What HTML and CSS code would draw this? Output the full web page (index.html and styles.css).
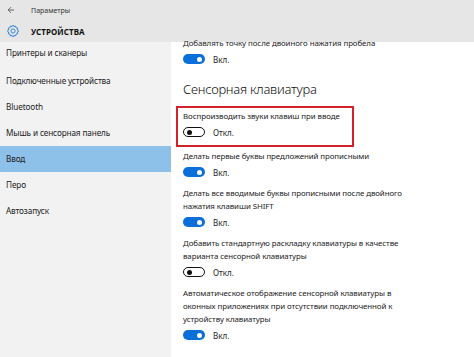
FILE: index.html
```html
<!DOCTYPE html>
<html lang="ru">
<head>
<meta charset="utf-8">
<title>Параметры</title>
<link rel="stylesheet" href="styles.css">
</head>
<body>
<div class="window">
  <header class="top">
    <div class="titlebar">
      <svg class="back" width="8" height="8" viewBox="0 0 8 8"><path d="M7 4H1.2M4 1.2L1.2 4L4 6.8" fill="none" stroke="#555" stroke-width="0.9"/></svg>
      <span class="title">Параметры</span>
    </div>
    <div class="section">
      <svg class="gear" width="14" height="14" viewBox="0 0 24 24"><path d="M12 1.8l1.6 2.6 3-.8.6 3 3 .7-.8 3 2.5 1.7-2.5 1.7.8 3-3 .7-.6 3-3-.8L12 22.2l-1.6-2.6-3 .8-.6-3-3-.7.8-3L2.1 12l2.5-1.7-.8-3 3-.7.6-3 3 .8z" fill="none" stroke="#2b7fd4" stroke-width="1.6" stroke-linejoin="round"/><circle cx="12" cy="12" r="3.6" fill="none" stroke="#2b7fd4" stroke-width="1.6"/></svg>
      <span class="section-name">УСТРОЙСТВА</span>
    </div>
  </header>
  <div class="main">
    <nav class="sidebar">
      <div class="nav-item first-item">Принтеры и сканеры</div>
      <div class="nav-item">Подключенные устройства</div>
      <div class="nav-item">Bluetooth</div>
      <div class="nav-item">Мышь и сенсорная панель</div>
      <div class="nav-item active">Ввод</div>
      <div class="nav-item">Перо</div>
      <div class="nav-item">Автозапуск</div>
    </nav>
    <section class="content">
      <div class="setting first">
        <div class="label">Добавлять точку после двоиного нажатия пробела</div>
        <div class="toggle-row"><span class="toggle on"></span><span class="state">Вкл.</span></div>
      </div>
      <h2 class="heading">Сенсорная клавиатура</h2>
      <div class="setting boxed">
        <div class="label">Воспроизводить звуки клавиш при вводе</div>
        <div class="toggle-row"><span class="toggle off"></span><span class="state">Откл.</span></div>
      </div>
      <div class="setting">
        <div class="label">Делать первые буквы предложений прописными</div>
        <div class="toggle-row"><span class="toggle on"></span><span class="state">Вкл.</span></div>
      </div>
      <div class="setting">
        <div class="label">Делать все вводимые буквы прописными после двойного<br>нажатия клавиши SHIFT</div>
        <div class="toggle-row"><span class="toggle on"></span><span class="state">Вкл.</span></div>
      </div>
      <div class="setting">
        <div class="label">Добавить стандартную раскладку клавиатуры в качестве<br>варианта сенсорной клавиатуры</div>
        <div class="toggle-row"><span class="toggle off"></span><span class="state">Откл.</span></div>
      </div>
      <div class="setting">
        <div class="label">Автоматическое отображение сенсорной клавиатуры в<br>оконных приложениях при отсутствии подключенной к<br>устройству клавиатуры</div>
        <div class="toggle-row"><span class="toggle on"></span><span class="state">Вкл.</span></div>
      </div>
    </section>
  </div>
</div>
</body>
</html>
```

FILE: styles.css
```css
* { box-sizing: border-box; }
html, body { margin: 0; padding: 0; }
body {
  width: 474px;
  height: 357px;
  overflow: hidden;
  font-family: "Noto Sans", "Open Sans", sans-serif;
  color: #1e1e1e;
  background: #fff;
}
.window { display: flex; flex-direction: column; height: 357px; }
.top {
  background: #e6e6e6;
  height: 42px;
  display: flex;
  flex-direction: column;
}
.titlebar {
  height: 20px;
  display: flex;
  align-items: center;
  padding-left: 7px;
}
.back { margin-right: 16px; }
.title { font-size: 7px; color: #333; }
.section {
  height: 22px;
  display: flex;
  align-items: center;
  padding-left: 6px;
}
.gear { margin-right: 11px; }
.section-name { font-size: 8px; font-weight: 700; color: #111; letter-spacing: 0.1px; }
.main { flex: 1; display: flex; }
.sidebar {
  width: 171px;
  background: #f2f2f2;
  display: flex;
  flex-direction: column;
}
.nav-item {
  height: 26px;
  line-height: 26px;
  padding-left: 6px;
  font-size: 8.2px;
  letter-spacing: -0.12px;
  color: #222;
}
.nav-item.first-item { line-height: 22px; padding-bottom: 4px; }
.nav-item.active { background: #8ec1ea; }
.content {
  flex: 1;
  padding-left: 12px;
  display: flex;
  flex-direction: column;
  align-items: flex-start;
}
.setting { padding: 0 0 8px; }
.label { font-size: 7.9px; letter-spacing: -0.08px; line-height: 13px; color: #222; }
.toggle-row { display: flex; align-items: center; height: 14px; margin-top: 2px; }
.toggle {
  width: 22px;
  height: 10px;
  border-radius: 5px;
  position: relative;
  margin-right: 8px;
}
.toggle::after {
  content: "";
  position: absolute;
  top: 50%;
  width: 5px;
  height: 5px;
  margin-top: -2.5px;
  border-radius: 50%;
}
.toggle.on { background: #0a6fd8; }
.toggle.on::after { right: 3px; background: #fff; }
.toggle.off { border: 1.5px solid #111; background: #fff; }
.toggle.off::after { left: 2.5px; background: #111; }
.state { font-size: 8px; color: #222; }
.first { margin-top: -5px; }
.heading {
  font-size: 13px;
  letter-spacing: -0.25px;
  font-weight: 300;
  margin: 6px 0 8px;
  line-height: 18px;
  color: #111;
}
.boxed {
  border: 2px solid #d2232a;
  margin-left: -7px;
  padding: 2px 12px 6px 5px;
  margin-bottom: 3px;
}
```
